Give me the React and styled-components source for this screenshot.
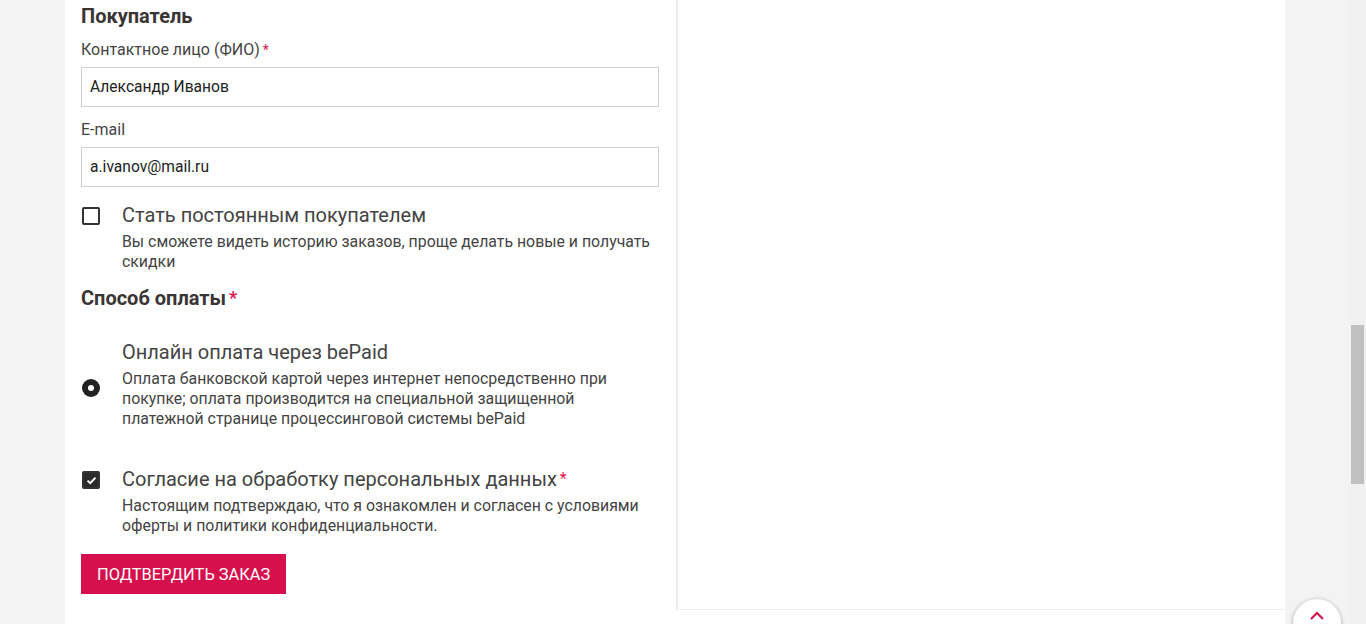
import React from "react";
import styled, { createGlobalStyle } from "styled-components";

const GlobalStyle = createGlobalStyle`
  html, body {
    margin: 0;
    padding: 0;
    height: 100%;
    overflow: hidden;
  }
  body {
    background: #f3f3f3;
    font-family: Roboto, "Liberation Sans", Arial, sans-serif;
    color: #333;
  }
`;

const Page = styled.div`
  display: flex;
  height: 624px;
`;

const Main = styled.div`
  flex: 1;
  padding-left: 65px;
  padding-right: 64px;
`;

const Container = styled.div`
  display: grid;
  grid-template-columns: 611px 1fr;
  background: #fff;
  height: 624px;
`;

const FormColumn = styled.div`
  padding: 4px 17px 0 16px;
`;

const Aside = styled.aside`
  height: 609px;
  border-left: 2px solid #ececec;
  border-bottom: 1px solid #f0f0f0;
`;

const Heading = styled.h3`
  margin: ${p => p.$mt || 0}px 0 0;
  font-size: 20px;
  line-height: 24px;
  font-weight: 700;
  color: #3a3535;
`;

const Req = styled.span`
  color: #e0174f;
  font-size: ${p => p.$size || 14}px;
  margin-left: 3px;
  vertical-align: top;
`;

const Label = styled.div`
  margin-top: ${p => p.$mt || 10}px;
  font-size: 16px;
  line-height: 20px;
  color: #444;
`;

const Input = styled.input`
  display: block;
  box-sizing: border-box;
  width: 578px;
  height: 40px;
  margin-top: 7px;
  padding: 0 8px;
  border: 1px solid #cfcfcf;
  background: #fff;
  font-family: inherit;
  font-size: 15.6px;
  color: #222;
  outline: none;
`;

const Option = styled.label`
  display: grid;
  grid-template-columns: 41px 1fr;
  align-items: ${p => (p.$center ? "center" : "start")};
  margin-top: ${p => p.$mt || 0}px;
  cursor: pointer;
`;

const Box = styled.span`
  box-sizing: border-box;
  width: 18px;
  height: 18px;
  margin: 5px 0 0 1px;
  border: 2px solid #333;
  border-radius: 2px;
  background: ${p => (p.$checked ? "#2b2b2b" : "#fff")};
  display: flex;
  align-items: center;
  justify-content: center;
`;

const Radio = styled.span`
  display: flex;
  align-items: center;
  justify-content: center;
  width: 18px;
  height: 18px;
  margin: 8px 0 0 1px;
  border-radius: 50%;
  background: #222;
  &::after {
    content: "";
    width: 6px;
    height: 6px;
    border-radius: 50%;
    background: #fff;
  }
`;

const OptionTitle = styled.div`
  font-size: 20px;
  line-height: 26px;
  color: #444;
`;

const OptionText = styled.div`
  margin-top: 4px;
  max-width: ${p => p.$max || 540}px;
  font-size: 15.85px;
  line-height: 20px;
  color: #444;
`;

const SubmitButton = styled.button`
  display: block;
  margin-top: 18px;
  height: 40px;
  padding: 0 16px;
  border: 0;
  background: #d6104c;
  color: #fff;
  font-family: inherit;
  font-size: 16.4px;
  text-transform: uppercase;
  cursor: pointer;
`;

const Scrollbar = styled.div`
  width: 17px;
  background: #f1f1f1;
  position: relative;
`;

const Thumb = styled.div`
  position: absolute;
  left: 2px;
  right: 2px;
  top: 325px;
  height: 159px;
  background: #c1c1c1;
`;

const ToTop = styled.button`
  position: fixed;
  left: 1293px;
  top: 599px;
  width: 48px;
  height: 48px;
  border-radius: 50%;
  border: 0;
  background: #fff;
  box-shadow: 0 1px 4px rgba(0, 0, 0, 0.35);
  display: flex;
  justify-content: center;
  padding-top: 12px;
  cursor: pointer;
`;

const Check = () => (
  <svg width="11" height="9" viewBox="0 0 11 9">
    <path d="M1.5 4.6 L4.2 7.2 L9.5 1.6" fill="none" stroke="#fff" strokeWidth="2" />
  </svg>
);

export default function App() {
  return (
    <>
      <GlobalStyle />
      <Page>
        <Main>
          <Container>
            <FormColumn>
              <Heading>Покупатель</Heading>
              <Label $mt={12}>
                Контактное лицо (ФИО)<Req $size={14}>*</Req>
              </Label>
              <Input defaultValue="Александр Иванов" />
              <Label $mt={13}>E-mail</Label>
              <Input defaultValue="a.ivanov@mail.ru" />

              <Option $mt={15}>
                <Box />
                <div>
                  <OptionTitle>Стать постоянным покупателем</OptionTitle>
                  <OptionText>
                    Вы сможете видеть историю заказов, проще делать новые и получать
                    скидки
                  </OptionText>
                </div>
              </Option>

              <Heading $mt={14}>
                Способ оплаты<Req $size={18}>*</Req>
              </Heading>

              <Option $mt={29} $center>
                <Radio />
                <div>
                  <OptionTitle>Онлайн оплата через bePaid</OptionTitle>
                  <OptionText $max={505}>
                    Оплата банковской картой через интернет непосредственно при
                    покупке; оплата производится на специальной защищенной
                    платежной странице процессинговой системы bePaid
                  </OptionText>
                </div>
              </Option>

              <Option $mt={37}>
                <Box $checked>
                  <Check />
                </Box>
                <div>
                  <OptionTitle>
                    Согласие на обработку персональных данных<Req $size={16}>*</Req>
                  </OptionTitle>
                  <OptionText>
                    Настоящим подтверждаю, что я ознакомлен и согласен с условиями
                    оферты и политики конфиденциальности.
                  </OptionText>
                </div>
              </Option>

              <SubmitButton>Подтвердить заказ</SubmitButton>
            </FormColumn>
            <Aside />
          </Container>
        </Main>
        <Scrollbar>
          <Thumb />
        </Scrollbar>
      </Page>
      <ToTop aria-label="Наверх">
        <svg width="16" height="10" viewBox="0 0 16 10">
          <path d="M2 8 L8 2 L14 8" fill="none" stroke="#d6104c" strokeWidth="2" />
        </svg>
      </ToTop>
    </>
  );
}
